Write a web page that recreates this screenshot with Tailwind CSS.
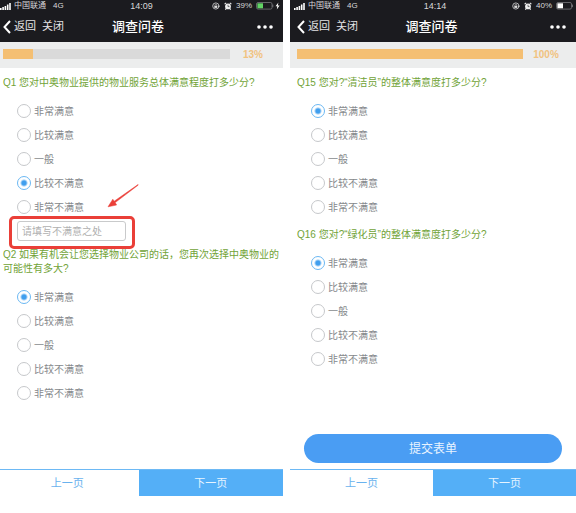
<!DOCTYPE html>
<html lang="zh-CN">
<head>
<meta charset="utf-8">
<meta name="viewport" content="width=device-width, initial-scale=1">
<title>调查问卷</title>
<script src="https://cdn.jsdelivr.net/npm/@tailwindcss/browser@4"></script>
</head>
<body class="bg-white font-['Liberation_Sans','Noto_Sans_CJK_SC',sans-serif]">
<svg class="hidden" aria-hidden="true">
  <symbol id="signal" viewBox="0 0 11 7"><path fill="#fff" d="M0 5h1.6v2H0zM2.3 4h1.6v3H2.3zM4.6 3h1.6v4H4.6zM6.9 1.5h1.6V7H6.9zM9.2 0h1.6v7H9.2z"/></symbol>
  <symbol id="lock" viewBox="0 0 8 8"><circle cx="3.8" cy="4" r="3.1" fill="none" stroke="#d4d4d6" stroke-width=".8"/><path d="M2.3 3.7h3v2.2h-3z" fill="#ddd"/><path d="M2.9 3.7v-.6a.9.9 0 0 1 1.8 0v.6" fill="none" stroke="#ddd" stroke-width=".6"/><path d="M5.8 3.8h2.2L6.9 5.2z" fill="#ddd"/></symbol>
  <symbol id="alarm" viewBox="0 0 8 8"><circle cx="4" cy="4.4" r="2.9" fill="#eee"/><path d="M.6 2.2 2.2.8M7.4 2.2 5.8.8M2.1 6.6l-.8 1M5.9 6.6l.8 1" stroke="#eee" stroke-width="1.1"/><path d="M4 2.8v1.8h1.5" fill="none" stroke="#1b1b1f" stroke-width=".6"/></symbol>
  <symbol id="back" viewBox="0 0 8 14"><path d="M7 1 1.5 7 7 13" fill="none" stroke="#fff" stroke-width="2"/></symbol>
  <symbol id="more" viewBox="0 0 16 4"><circle cx="2" cy="2" r="1.8"/><circle cx="8" cy="2" r="1.8"/><circle cx="14" cy="2" r="1.8"/></symbol>
</svg>

<div class="grid min-h-screen grid-cols-[283fr_286fr] gap-x-[7px] pb-[17px]">

  <section class="flex min-w-0 flex-col">
    <header class="bg-[#1b1b1f] text-white">
      <div class="grid h-[11px] grid-cols-[1fr_auto_1fr] items-center pt-px text-[8px] leading-[10px] text-[#d8d8da]">
        <div class="flex items-center gap-[3px]">
          <svg class="h-[7px] w-[11px]"><use href="#signal"/></svg>
          <span>中国联通</span><span class="ml-1">4G</span>
        </div>
        <span class="text-[9px]">14:09</span>
        <div class="flex items-center justify-end gap-1 pr-[3px]">
          <svg class="size-2"><use href="#lock"/></svg>
          <svg class="size-2"><use href="#alarm"/></svg>
          <span>39%</span>
          <svg class="h-[8px] w-[24px]" viewBox="0 0 24 8"><rect x=".5" y=".5" width="15.5" height="6.6" rx="1.5" fill="none" stroke="#77777b" stroke-width=".8"/><rect x="1.4" y="1.3" width="5.6" height="5" fill="#62d465"/><path d="M16.8 2.6v2.6" stroke="#77777b"/><path d="M22.4.5 19.6 4.3h1.7l-.5 3.2 2.8-4h-1.8z" fill="#fff"/></svg>
        </div>
      </div>
      <div class="grid h-[31px] grid-cols-[1fr_auto_1fr] items-center pr-[10px] pl-[3px]">
        <nav class="flex items-center gap-[6px] text-[11px] text-[#e4e4e6]">
          <a href="#" class="flex items-center gap-[3px]"><svg class="h-[14px] w-2"><use href="#back"/></svg>返回</a>
          <a href="#">关闭</a>
        </nav>
        <h1 class="text-[13px] font-medium">调查问卷</h1>
        <button type="button" aria-label="更多" class="justify-self-end"><svg class="h-1 w-4 fill-white"><use href="#more"/></svg></button>
      </div>
    </header>
    <div class="flex h-[26px] items-center bg-[#eceded] pr-[7px] pl-[3px]">
      <div class="mb-[3px] h-[10px] flex-1 bg-[#dadada]"><div class="h-full bg-[#f4bf73]" style="width:13%"></div></div>
      <span class="w-[46px] text-center text-[10px] leading-[12px] font-bold text-[#f1c27f]">13%</span>
    </div>
    <form class="flex flex-1 flex-col">
      <fieldset class="pt-2">
        <legend class="contents"><span class="block pl-[3px] text-[10px] leading-[14px] text-[#71a337]">Q1 您对中奥物业提供的物业服务总体满意程度打多少分?</span></legend>
        <div class="pt-[9px] pl-[17px] text-[10px] leading-[14px] text-[#85888b]">
          <label class="flex h-6 items-center gap-[3px]"><input type="radio" name="q1" class="size-[14px] appearance-none rounded-full border border-[#c6c8cb] checked:border-[#6bb8f3] checked:bg-[radial-gradient(circle,#3f9eee_2px,transparent_4px)]"><span class="pt-[2px]">非常满意</span></label>
          <label class="flex h-6 items-center gap-[3px]"><input type="radio" name="q1" class="size-[14px] appearance-none rounded-full border border-[#c6c8cb] checked:border-[#6bb8f3] checked:bg-[radial-gradient(circle,#3f9eee_2px,transparent_4px)]"><span class="pt-[2px]">比较满意</span></label>
          <label class="flex h-6 items-center gap-[3px]"><input type="radio" name="q1" class="size-[14px] appearance-none rounded-full border border-[#c6c8cb] checked:border-[#6bb8f3] checked:bg-[radial-gradient(circle,#3f9eee_2px,transparent_4px)]"><span class="pt-[2px]">一般</span></label>
          <label class="flex h-6 items-center gap-[3px]"><input type="radio" name="q1" checked class="size-[14px] appearance-none rounded-full border border-[#c6c8cb] checked:border-[#6bb8f3] checked:bg-[radial-gradient(circle,#3f9eee_2px,transparent_4px)]"><span class="pt-[2px]">比较不满意</span></label>
          <label class="flex h-6 items-center gap-[3px]"><input type="radio" name="q1" class="size-[14px] appearance-none rounded-full border border-[#c6c8cb] checked:border-[#6bb8f3] checked:bg-[radial-gradient(circle,#3f9eee_2px,transparent_4px)]"><span class="pt-[2px]">非常不满意</span></label>
          <div class="relative mt-[2px] mb-[7px] w-[109px]">
            <input type="text" aria-label="请填写不满意之处" placeholder="请填写不满意之处" class="block h-5 w-full rounded-[3px] border border-[#c9cacb] px-1 text-[10px] placeholder:text-[#b0b0b0]">
            <div class="pointer-events-none absolute -top-[5px] -right-[9px] -bottom-[8px] -left-[8px] rounded-[5px] border-3 border-[#ea3f38]"></div>
            <svg class="pointer-events-none absolute -top-[37px] left-[90px] h-6 w-8" viewBox="0 0 32 24" aria-hidden="true"><path d="M31.3 1 8.2 18.6 9.6 21 1 22.8 5.8 15.2 7.2 17.2 31 .6z" fill="#ea3f38" stroke="#ea3f38" stroke-width=".5"/></svg>
          </div>
        </div>
      </fieldset>
      <fieldset>
        <legend class="contents"><span class="block pl-[3px] text-[10px] leading-[14px] text-[#71a337]">Q2 如果有机会让您选择物业公司的话，您再次选择中奥物业的可能性有多大?</span></legend>
        <div class="pt-[9px] pl-[17px] text-[10px] leading-[14px] text-[#85888b]">
          <label class="flex h-6 items-center gap-[3px]"><input type="radio" name="q2" checked class="size-[14px] appearance-none rounded-full border border-[#c6c8cb] checked:border-[#6bb8f3] checked:bg-[radial-gradient(circle,#3f9eee_2px,transparent_4px)]"><span class="pt-[2px]">非常满意</span></label>
          <label class="flex h-6 items-center gap-[3px]"><input type="radio" name="q2" class="size-[14px] appearance-none rounded-full border border-[#c6c8cb] checked:border-[#6bb8f3] checked:bg-[radial-gradient(circle,#3f9eee_2px,transparent_4px)]"><span class="pt-[2px]">比较满意</span></label>
          <label class="flex h-6 items-center gap-[3px]"><input type="radio" name="q2" class="size-[14px] appearance-none rounded-full border border-[#c6c8cb] checked:border-[#6bb8f3] checked:bg-[radial-gradient(circle,#3f9eee_2px,transparent_4px)]"><span class="pt-[2px]">一般</span></label>
          <label class="flex h-6 items-center gap-[3px]"><input type="radio" name="q2" class="size-[14px] appearance-none rounded-full border border-[#c6c8cb] checked:border-[#6bb8f3] checked:bg-[radial-gradient(circle,#3f9eee_2px,transparent_4px)]"><span class="pt-[2px]">比较不满意</span></label>
          <label class="flex h-6 items-center gap-[3px]"><input type="radio" name="q2" class="size-[14px] appearance-none rounded-full border border-[#c6c8cb] checked:border-[#6bb8f3] checked:bg-[radial-gradient(circle,#3f9eee_2px,transparent_4px)]"><span class="pt-[2px]">非常不满意</span></label>
        </div>
      </fieldset>
      <div class="mt-auto grid h-[27px] grid-cols-[49fr_51fr] border-t border-[#6db9f5] text-[11px]">
        <button type="button" class="pr-1 text-[#69b2ee]">上一页</button>
        <button type="button" class="bg-[#54aff7] text-[#e6f4ff]">下一页</button>
      </div>
    </form>
  </section>

  <section class="flex min-w-0 flex-col">
    <header class="bg-[#1b1b1f] text-white">
      <div class="grid h-[11px] grid-cols-[1fr_auto_1fr] items-center pt-px pl-1 text-[8px] leading-[10px] text-[#d8d8da]">
        <div class="flex items-center gap-[3px]">
          <svg class="h-[7px] w-[11px]"><use href="#signal"/></svg>
          <span>中国联通</span><span class="ml-1">4G</span>
        </div>
        <span class="text-[9px]">14:14</span>
        <div class="flex items-center justify-end gap-1 pr-[3px]">
          <svg class="size-2"><use href="#lock"/></svg>
          <svg class="size-2"><use href="#alarm"/></svg>
          <span>40%</span>
          <svg class="h-[8px] w-[17px]" viewBox="0 0 17 8"><rect x=".5" y=".5" width="15" height="6.6" rx="1.5" fill="none" stroke="#77777b" stroke-width=".8"/><rect x="1.4" y="1.3" width="5.6" height="5" fill="#fff"/><path d="M16.4 2.6v2.6" stroke="#77777b"/></svg>
        </div>
      </div>
      <div class="grid h-[31px] grid-cols-[1fr_auto_1fr] items-center pr-[10px] pl-[7px]">
        <nav class="flex items-center gap-[6px] text-[11px] text-[#e4e4e6]">
          <a href="#" class="flex items-center gap-[3px]"><svg class="h-[14px] w-2"><use href="#back"/></svg>返回</a>
          <a href="#">关闭</a>
        </nav>
        <h1 class="text-[13px] font-medium">调查问卷</h1>
        <button type="button" aria-label="更多" class="justify-self-end"><svg class="h-1 w-4 fill-white"><use href="#more"/></svg></button>
      </div>
    </header>
    <div class="flex h-[26px] items-center bg-[#eceded] px-[7px]">
      <div class="mb-[3px] h-[10px] flex-1 bg-[#dadada]"><div class="h-full bg-[#f4bf73]" style="width:100%"></div></div>
      <span class="w-[46px] text-center text-[10px] leading-[12px] font-bold text-[#f1c27f]">100%</span>
    </div>
    <form class="flex flex-1 flex-col">
      <fieldset class="pt-2">
        <legend class="contents"><span class="block pl-[7px] text-[10px] leading-[14px] text-[#71a337]">Q15 您对?“清洁员”的整体满意度打多少分?</span></legend>
        <div class="pt-[9px] pl-[21px] text-[10px] leading-[14px] text-[#85888b]">
          <label class="flex h-6 items-center gap-[3px]"><input type="radio" name="q15" checked class="size-[14px] appearance-none rounded-full border border-[#c6c8cb] checked:border-[#6bb8f3] checked:bg-[radial-gradient(circle,#3f9eee_2px,transparent_4px)]"><span class="pt-[2px]">非常满意</span></label>
          <label class="flex h-6 items-center gap-[3px]"><input type="radio" name="q15" class="size-[14px] appearance-none rounded-full border border-[#c6c8cb] checked:border-[#6bb8f3] checked:bg-[radial-gradient(circle,#3f9eee_2px,transparent_4px)]"><span class="pt-[2px]">比较满意</span></label>
          <label class="flex h-6 items-center gap-[3px]"><input type="radio" name="q15" class="size-[14px] appearance-none rounded-full border border-[#c6c8cb] checked:border-[#6bb8f3] checked:bg-[radial-gradient(circle,#3f9eee_2px,transparent_4px)]"><span class="pt-[2px]">一般</span></label>
          <label class="flex h-6 items-center gap-[3px]"><input type="radio" name="q15" class="size-[14px] appearance-none rounded-full border border-[#c6c8cb] checked:border-[#6bb8f3] checked:bg-[radial-gradient(circle,#3f9eee_2px,transparent_4px)]"><span class="pt-[2px]">比较不满意</span></label>
          <label class="flex h-6 items-center gap-[3px]"><input type="radio" name="q15" class="size-[14px] appearance-none rounded-full border border-[#c6c8cb] checked:border-[#6bb8f3] checked:bg-[radial-gradient(circle,#3f9eee_2px,transparent_4px)]"><span class="pt-[2px]">非常不满意</span></label>
        </div>
      </fieldset>
      <fieldset class="pt-[9px]">
        <legend class="contents"><span class="block pl-[7px] text-[10px] leading-[14px] text-[#71a337]">Q16 您对?“绿化员”的整体满意度打多少分?</span></legend>
        <div class="pt-[9px] pl-[21px] text-[10px] leading-[14px] text-[#85888b]">
          <label class="flex h-6 items-center gap-[3px]"><input type="radio" name="q16" checked class="size-[14px] appearance-none rounded-full border border-[#c6c8cb] checked:border-[#6bb8f3] checked:bg-[radial-gradient(circle,#3f9eee_2px,transparent_4px)]"><span class="pt-[2px]">非常满意</span></label>
          <label class="flex h-6 items-center gap-[3px]"><input type="radio" name="q16" class="size-[14px] appearance-none rounded-full border border-[#c6c8cb] checked:border-[#6bb8f3] checked:bg-[radial-gradient(circle,#3f9eee_2px,transparent_4px)]"><span class="pt-[2px]">比较满意</span></label>
          <label class="flex h-6 items-center gap-[3px]"><input type="radio" name="q16" class="size-[14px] appearance-none rounded-full border border-[#c6c8cb] checked:border-[#6bb8f3] checked:bg-[radial-gradient(circle,#3f9eee_2px,transparent_4px)]"><span class="pt-[2px]">一般</span></label>
          <label class="flex h-6 items-center gap-[3px]"><input type="radio" name="q16" class="size-[14px] appearance-none rounded-full border border-[#c6c8cb] checked:border-[#6bb8f3] checked:bg-[radial-gradient(circle,#3f9eee_2px,transparent_4px)]"><span class="pt-[2px]">比较不满意</span></label>
          <label class="flex h-6 items-center gap-[3px]"><input type="radio" name="q16" class="size-[14px] appearance-none rounded-full border border-[#c6c8cb] checked:border-[#6bb8f3] checked:bg-[radial-gradient(circle,#3f9eee_2px,transparent_4px)]"><span class="pt-[2px]">非常不满意</span></label>
        </div>
      </fieldset>
      <button type="submit" class="mx-[14px] mt-auto mb-[6px] h-[29px] rounded-full bg-[#4a9df3] text-[12px] text-[#e9f4ff]">提交表单</button>
      <div class="grid h-[27px] grid-cols-2 border-t border-[#6db9f5] text-[11px]">
        <button type="button" class="text-[#69b2ee]">上一页</button>
        <button type="button" class="bg-[#54aff7] text-[#e6f4ff]">下一页</button>
      </div>
    </form>
  </section>
</div>
</body>
</html>
